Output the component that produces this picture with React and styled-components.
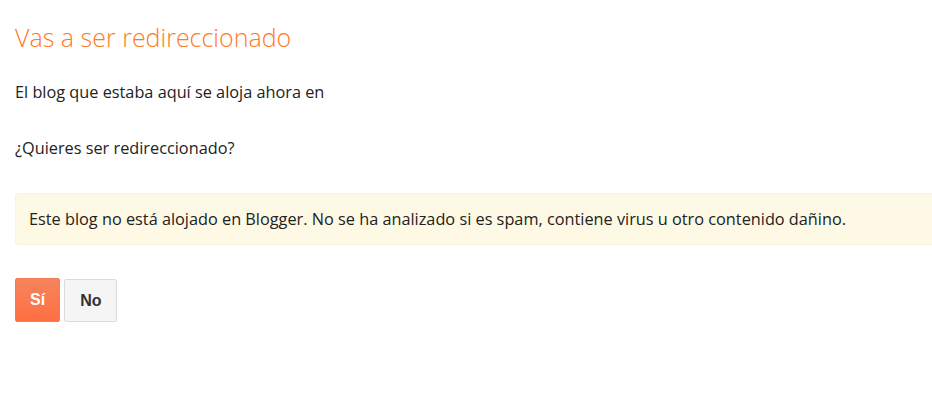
import React from "react";
import styled, { createGlobalStyle } from "styled-components";

const Global = createGlobalStyle`
  body {
    margin: 0;
    background: #fff;
    font-family: "Open Sans", "Liberation Sans", sans-serif;
    color: #222;
  }
`;

const Page = styled.div`
  padding: 12px 0 0 15px;
`;

const Title = styled.h1`
  margin: 0;
  font-size: 25px;
  font-weight: 300;
  line-height: 50px;
  color: #ff7a1f;
`;

const Text = styled.p`
  margin: ${(p) => p.top || 0}px 0 0;
  font-size: 16.3px;
  line-height: 20px;
  color: #222;
`;

const Notice = styled.div`
  margin-top: 35px;
  width: 100%;
  box-sizing: content-box;
  padding: 15px 13px;
  font-size: 16.3px;
  line-height: 20px;
  background: #fef9e4;
  border: 1px solid #fbf3dc;
  border-radius: 3px;
`;

const Actions = styled.div`
  display: flex;
  align-items: flex-start;
  gap: 4px;
  margin-top: 33px;
`;

const Button = styled.button`
  font-family: "Liberation Sans", Arial, sans-serif;
  font-weight: bold;
  font-size: 16px;
  height: ${(p) => (p.primary ? 44 : 43)}px;
  padding: 0 ${(p) => (p.primary ? 14 : 15)}px;
  margin-top: ${(p) => (p.primary ? 0 : 1)}px;
  border-radius: 2px;
  cursor: pointer;
  color: ${(p) => (p.primary ? "#fff" : "#333")};
  background: ${(p) => (p.primary ? "linear-gradient(#f6845c, #ff6f42)" : "#f5f5f5")};
  border: 1px solid ${(p) => (p.primary ? "#f47c55" : "#dcdcdc")};
`;

export default function App() {
  return (
    <Page>
      <Global />
      <Title>Vas a ser redireccionado</Title>
      <Text top={20}>El blog que estaba aquí se aloja ahora en</Text>
      <Text top={36}>¿Quieres ser redireccionado?</Text>
      <Notice>
        Este blog no está alojado en Blogger. No se ha analizado si es spam, contiene virus u otro contenido dañino.
      </Notice>
      <Actions>
        <Button primary>Sí</Button>
        <Button>No</Button>
      </Actions>
    </Page>
  );
}
